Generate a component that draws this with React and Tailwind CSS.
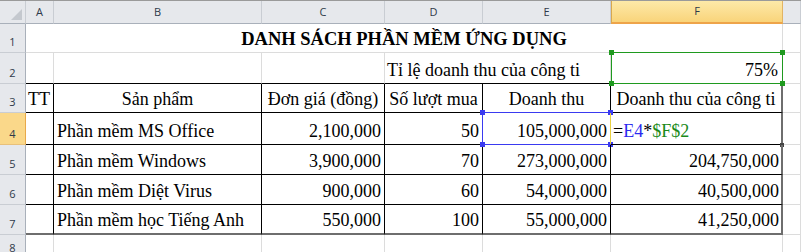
import React from "react";

const serif = "font-['Liberation_Serif','Times_New_Roman',serif]";
const ui = "font-['Open_Sans','Segoe_UI',sans-serif]";

const hdr = `bg-[#e6e8ec] border-r border-b border-r-[#c9cdd3] border-b-[#a9b0ba] flex items-center justify-center text-[11px] text-[#2f3a4a] ${ui}`;
const rowHdr = `bg-[#e6e8ec] border-r border-b border-r-[#a9b0ba] border-b-[#c9cdd3] flex items-end justify-center pb-[3px] text-[11px] leading-[14px] text-[#2f3a4a] ${ui}`;
const rowHdrSel = `bg-[#fad88a] border-r border-b border-r-[#e8a94a] border-b-[#e8c07a] flex items-end justify-center pb-[3px] text-[11px] leading-[14px] text-[#2f3a4a] ${ui}`;
const grid = "border-r border-b border-[#dcdcdc]";
const txt = `${serif} text-[18px] leading-[20px] text-black flex items-end pb-[3px] whitespace-nowrap`;

function Handle({ className }) {
  return <div className={`absolute w-[5px] h-[5px] ${className}`} />;
}

export default function App() {
  const rows = [
    { n: 4, name: "Phần mềm MS Office", price: "2,100,000", qty: "50", rev: "105,000,000", co: null },
    { n: 5, name: "Phần mềm Windows", price: "3,900,000", qty: "70", rev: "273,000,000", co: "204,750,000" },
    { n: 6, name: "Phần mềm Diệt Virus", price: "900,000", qty: "60", rev: "54,000,000", co: "40,500,000" },
    { n: 7, name: "Phần mềm học Tiếng Anh", price: "550,000", qty: "100", rev: "55,000,000", co: "41,250,000" },
  ];

  return (
    <div className="w-[801px] h-[252px] bg-white overflow-hidden border-t border-[#9a9a9a]">
      <div className="grid grid-cols-[26px_28px_208px_123px_98px_128px_172px_18px] grid-rows-[23px_29px_31px_29px_32px_30px_30px_30px_24px]">
        {/* header row */}
        <div className={`${hdr} relative`}>
          <svg className="absolute right-[3px] bottom-[3px]" width="11" height="11" viewBox="0 0 11 11">
            <polygon points="11,0 11,11 0,11" fill="#c4c8ce" />
          </svg>
        </div>
        <div className={hdr}>A</div>
        <div className={hdr}>B</div>
        <div className={hdr}>C</div>
        <div className={hdr}>D</div>
        <div className={hdr}>E</div>
        <div className={`bg-gradient-to-b from-[#fde9a8] to-[#f9d47a] border-l border-l-[#d9a84e] border-r border-r-[#e2b463] border-b-2 border-b-[#eea44a] flex items-center justify-center text-[11px] text-[#2f3a4a] ${ui}`}>F</div>
        <div className={hdr}></div>

        {/* row 1 */}
        <div className={rowHdr}>1</div>
        <div className={`col-span-6 ${grid} ${serif} font-bold text-[18.5px] leading-[20px] flex items-end justify-center pb-[3px] text-black`}>
          DANH SÁCH PHẦN MỀM ỨNG DỤNG
        </div>
        <div className={grid}></div>

        {/* row 2 */}
        <div className={rowHdr}>2</div>
        <div className="border-r border-r-[#dcdcdc] border-b border-b-black"></div>
        <div className="border-r border-r-[#dcdcdc] border-b border-b-black"></div>
        <div className="border-r border-r-[#dcdcdc] border-b border-b-black"></div>
        <div className={`col-span-2 border-r border-r-[#dcdcdc] border-b border-b-black ${txt} pl-[2px]`}>
          Tỉ lệ doanh thu của công ti
        </div>
        <div className={`relative border-r border-r-[#dcdcdc] border-b border-b-black ${txt} justify-end pr-[4px]`}>
          75%
          <div className="absolute left-0 top-[-1px] right-[-1px] bottom-[-1px] border border-[#1f9a1f]">
            <Handle className="left-[-3px] top-[-3px] bg-[#1f9a1f]" />
            <Handle className="right-[-3px] top-[-3px] bg-[#1f9a1f]" />
            <Handle className="left-[-3px] bottom-[-3px] bg-[#1f9a1f]" />
            <Handle className="right-[-3px] bottom-[-3px] bg-[#1f9a1f]" />
          </div>
        </div>
        <div className={grid}></div>

        {/* row 3 */}
        <div className={rowHdr}>3</div>
        <div className={`border-r border-b border-black ${txt} pl-[2px]`}>TT</div>
        <div className={`border-r border-b border-black ${txt} justify-center`}>Sản phẩm</div>
        <div className={`border-r border-b border-black ${txt} justify-center`}>Đơn giá (đồng)</div>
        <div className={`border-r border-b border-black ${txt} justify-center`}>Số lượt mua</div>
        <div className={`border-r border-b border-black ${txt} justify-center`}>Doanh thu</div>
        <div className={`border-r-2 border-r-[#6e6e6e] border-b border-b-black ${txt} justify-center`}>Doanh thu của công ti</div>
        <div className={grid}></div>

        {rows.map((r, i) => {
          const last = i === rows.length - 1;
          const b = last ? "border-r border-r-black border-b-2 border-b-[#6e6e6e]" : "border-r border-b border-black";
          const bf = last ? "border-r-2 border-r-[#6e6e6e] border-b-2 border-b-[#6e6e6e]" : "border-r-2 border-r-[#6e6e6e] border-b border-b-black";
          return (
            <React.Fragment key={r.n}>
              <div className={r.n === 4 ? rowHdrSel : rowHdr}>{r.n}</div>
              <div className={`${b}`}></div>
              <div className={`${b} ${txt} pl-[3px]`}>{r.name}</div>
              <div className={`${b} ${txt} justify-end pr-[3px]`}>{r.price}</div>
              <div className={`${b} ${txt} justify-end pr-[3px]`}>{r.qty}</div>
              <div className={`${b} ${txt} justify-end pr-[3px] relative`}>
                {r.rev}
                {r.n === 4 && (
                  <div className="absolute left-[-1px] top-[-1px] right-[-1px] bottom-[-1px] border border-[#3a3af0]">
                    <Handle className="left-[-3px] top-[-3px] bg-[#3a3af0]" />
                    <Handle className="right-[-3px] top-[-3px] bg-[#3a3af0]" />
                    <Handle className="left-[-3px] bottom-[-3px] bg-[#3a3af0]" />
                    <Handle className="right-[-3px] bottom-[-3px] bg-[#3a3af0]" />
                  </div>
                )}
              </div>
              <div className={`${bf} ${txt} ${r.co ? "justify-end pr-[2px]" : "justify-start pl-[2px]"} relative`}>
                {r.co ? (
                  r.co
                ) : (
                  <>
                    <span>=</span>
                    <span className="text-[#2a2af0]">E4</span>
                    <span>*</span>
                    <span className="text-[#1a8a1a]">$F$2</span>
                    <div className="absolute left-[-1px] top-0 bottom-0 w-[1px] bg-[#e8d040]" />
                    <div className="absolute right-[-3px] bottom-[-3px] w-[4px] h-[4px] bg-[#444]" />
                  </>
                )}
              </div>
              <div className={grid}></div>
            </React.Fragment>
          );
        })}

        {/* row 8 */}
        <div className={rowHdr}>8</div>
        <div className={grid}></div>
        <div className={grid}></div>
        <div className={grid}></div>
        <div className={grid}></div>
        <div className={grid}></div>
        <div className={grid}></div>
        <div className={grid}></div>
      </div>
    </div>
  );
}
